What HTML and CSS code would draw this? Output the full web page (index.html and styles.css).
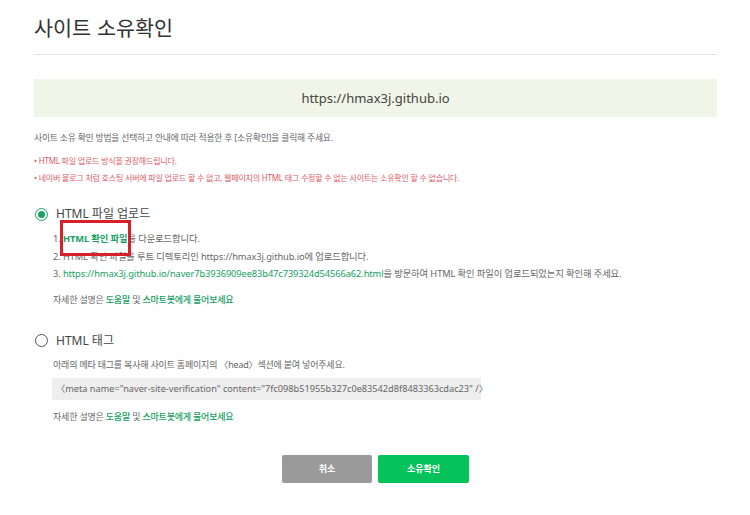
FILE: index.html
```html
<!DOCTYPE html>
<html lang="ko">
<head>
  <meta charset="UTF-8">
  <meta name="viewport" content="width=device-width, initial-scale=1.0">
  <title>사이트 소유확인</title>
  <link rel="stylesheet" href="styles.css">
</head>
<body>

  <div class="container">
    <h2 class="title">사이트 소유확인</h2>

    <div class="site-url">https://hmax3j.github.io</div>

    <p class="desc">사이트 소유 확인 방법을 선택하고 안내에 따라 적용한 후 [소유확인]을 클릭해 주세요.</p>
    <ul class="notice">
      <li>• HTML 파일 업로드 방식을 권장해드립니다.</li>
      <li>• 네이버 블로그 처럼 호스팅 서버에 파일 업로드 할 수 없고, 웹페이지의 HTML 태그 수정할 수 없는 사이트는 소유확인 할 수 없습니다.</li>
    </ul>

    <div class="option">
      <label class="option-head">
        <span class="radio checked"></span>
        HTML 파일 업로드
      </label>
      <ol class="steps">
        <li>1. <span class="mark"><a href="#" class="link">HTML 확인 파일</a></span>을 다운로드합니다.</li>
        <li>2. HTML 확인 파일을 루트 디렉토리인 https://hmax3j.github.io에 업로드합니다.</li>
        <li>3. <a href="#" class="link">https://hmax3j.github.io/naver7b3936909ee83b47c739324d54566a62.html</a>을 방문하여 HTML 확인 파일이 업로드되었는지 확인해 주세요.</li>
      </ol>
      <p class="help">자세한 설명은 <a href="#" class="link">도움말</a> 및 <a href="#" class="link">스마트봇에게 물어보세요</a></p>
    </div>

    <div class="option">
      <label class="option-head">
        <span class="radio"></span>
        HTML 태그
      </label>
      <p class="option-desc">아래의 메타 태그를 복사해 사이트 홈페이지의 〈head〉섹션에 붙여 넣어주세요.</p>
      <div class="meta-code">〈meta name="naver-site-verification" content="7fc098b51955b327c0e83542d8f8483363cdac23" /〉</div>
      <p class="help">자세한 설명은 <a href="#" class="link">도움말</a> 및 <a href="#" class="link">스마트봇에게 물어보세요</a></p>
    </div>

    <div class="buttons">
      <button class="btn btn-cancel">취소</button>
      <button class="btn btn-ok">소유확인</button>
    </div>
  </div>

</body>
</html>
```

FILE: styles.css
```css
body {
  font-family: "Noto Sans", "Noto Sans CJK KR", sans-serif;
  background-color: #fff;
  color: #666;
  margin: 0;
}
.container {
  width: 683px;
  padding: 0 0 0 34px;
}
.title {
  font-family: "Noto Sans CJK KR", sans-serif;
  font-size: 20.7px;
  font-weight: 400;
  color: #333;
  margin: 0;
  padding: 13px 0 12px;
  line-height: 29px;
  border-bottom: 1px solid #e4e4e4;
}
.site-url {
  margin-top: 24px;
  height: 38px;
  line-height: 38px;
  background-color: #f0f5e8;
  text-align: center;
  font-size: 13px;
  color: #444;
}
.desc {
  margin: 13px 0 0;
  font-size: 8.8px;
  line-height: 16px;
  letter-spacing: -0.2px;
}
.notice {
  list-style: none;
  margin: 6px 0 0;
  padding: 0;
  color: #dd5a66;
  font-size: 8px;
  letter-spacing: -0.2px;
}
.notice li {
  line-height: 17px;
}
.option {
  margin-top: 18px;
}
.option + .option {
  margin-top: 23px;
}
.option-head {
  display: flex;
  align-items: center;
  gap: 8px;
  font-size: 12px;
  color: #444;
  line-height: 20px;
}
.radio {
  width: 11px;
  height: 11px;
  border: 1.5px solid #555;
  border-radius: 50%;
  position: relative;
  margin-left: 1px;
}
.radio.checked {
  border-color: #1aa364;
}
.radio.checked::after {
  content: "";
  position: absolute;
  top: 2px;
  left: 2px;
  width: 7px;
  height: 7px;
  border-radius: 50%;
  background-color: #1aa364;
}
.steps {
  list-style: none;
  margin: 6px 0 0;
  padding: 0 0 0 19px;
  font-size: 9.3px;
  letter-spacing: -0.1px;
}
.steps li {
  line-height: 17.5px;
}
.link {
  color: #16a062;
  text-decoration: none;
  font-weight: 500;
}
.steps .link {
  font-weight: 400;
}
.steps li:first-child .link {
  font-weight: 700;
}
.mark {
  position: relative;
}
.mark::after {
  content: "";
  position: absolute;
  left: -3px;
  right: -4px;
  top: -12px;
  bottom: -11px;
  border: 3px solid #d7202c;
}
.help {
  margin: 9px 0 0 19px;
  font-size: 9px;
  line-height: 16px;
  letter-spacing: -0.2px;
}
.option-desc {
  margin: 6px 0 0 19px;
  font-size: 9px;
  line-height: 16px;
  letter-spacing: -0.2px;
}
.meta-code {
  margin: 5px 0 0 18px;
  width: 425px;
  height: 22px;
  line-height: 22px;
  padding-left: 4px;
  background-color: #eee;
  font-size: 9.2px;
  color: #666;
  white-space: nowrap;
}
.meta-code + .help {
  margin-top: 9px;
}
.buttons {
  display: flex;
  justify-content: center;
  gap: 6px;
  margin-top: 30px;
}
.btn {
  width: 90px;
  height: 28px;
  border: none;
  border-radius: 2px;
  color: #fff;
  font-family: "Noto Sans CJK KR", sans-serif;
  font-size: 9px;
  font-weight: 700;
  cursor: pointer;
}
.btn-cancel {
  background-color: #9a9a9a;
}
.btn-ok {
  width: 91px;
  background-color: #06c25a;
}
```
